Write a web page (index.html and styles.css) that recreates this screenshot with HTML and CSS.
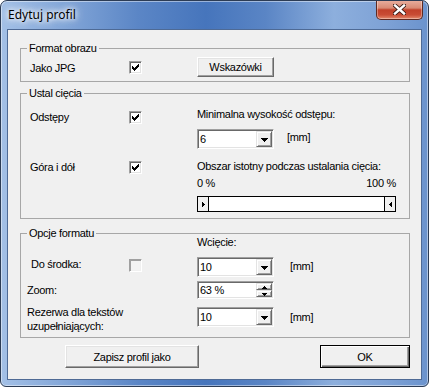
FILE: index.html
```html
<!DOCTYPE html>
<html lang="pl">
<head>
    <meta charset="UTF-8">
    <meta name="viewport" content="width=device-width, initial-scale=1.0">
    <title>Edytuj profil</title>
    <link rel="stylesheet" href="styles.css">
</head>
<body>
    <div class="window">
        <div class="titlebar">
            <span class="title">Edytuj profil</span>
            <div class="close">
                <svg width="13" height="11" viewBox="0 0 13 11">
                    <path d="M2 1.5 L11 9.5 M11 1.5 L2 9.5" stroke="#3a1a14" stroke-width="4.2" stroke-linecap="square"/>
                    <path d="M2 1.5 L11 9.5 M11 1.5 L2 9.5" stroke="#fff" stroke-width="2.4" stroke-linecap="square"/>
                </svg>
            </div>
        </div>

        <div class="client">
            <fieldset class="group g1">
                <legend>Format obrazu</legend>
                <div class="body">
                    <div class="row r-jpg">
                        <span class="lbl lbl-jpg">Jako JPG</span>
                        <span class="chk-cell"><span class="chk"><svg width="7" height="7" viewBox="0 0 7 7"><path d="M0 2h1v3h-1zM1 3h1v3h-1zM2 4h1v3h-1zM3 3h1v3h-1zM4 2h1v3h-1zM5 1h1v3h-1zM6 0h1v3h-1z"/></svg></span></span>
                        <button class="btn btn-hint">Wskazówki</button>
                    </div>
                </div>
            </fieldset>

            <fieldset class="group g2">
                <legend>Ustal cięcia</legend>
                <div class="body cols">
                    <div class="left">
                        <div class="row r-gap">
                            <span class="lbl">Odstępy</span>
                            <span class="chk-cell"><span class="chk"><svg width="7" height="7" viewBox="0 0 7 7"><path d="M0 2h1v3h-1zM1 3h1v3h-1zM2 4h1v3h-1zM3 3h1v3h-1zM4 2h1v3h-1zM5 1h1v3h-1zM6 0h1v3h-1z"/></svg></span></span>
                        </div>
                        <div class="row r-edge">
                            <span class="lbl">Góra i dół</span>
                            <span class="chk-cell"><span class="chk"><svg width="7" height="7" viewBox="0 0 7 7"><path d="M0 2h1v3h-1zM1 3h1v3h-1zM2 4h1v3h-1zM3 3h1v3h-1zM4 2h1v3h-1zM5 1h1v3h-1zM6 0h1v3h-1z"/></svg></span></span>
                        </div>
                    </div>
                    <div class="right">
                        <div class="txt">Minimalna wysokość odstępu:</div>
                        <div class="ctl-row r-min">
                            <div class="combo">
                                <span class="val">6</span>
                                <span class="drop"><svg width="7" height="4" viewBox="0 0 7 4"><path d="M0 0h7v1h-1v1h-1v1h-1v1h-1v-1h-1v-1h-1v-1h-1z"/></svg></span>
                            </div>
                            <span class="unit">[mm]</span>
                        </div>
                        <div class="txt t-area">Obszar istotny podczas ustalania cięcia:</div>
                        <div class="scale"><span>0 %</span><span>100 %</span></div>
                        <div class="slider">
                            <span class="thumb t-left"><svg width="3" height="5" viewBox="0 0 3 5"><path d="M0 0h1v1h1v1h1v1h-1v1h-1v1h-1z"/></svg></span>
                            <span class="track"></span>
                            <span class="thumb t-right"><svg width="3" height="5" viewBox="0 0 3 5"><path d="M3 0h-1v1h-1v1h-1v1h1v1h1v1h1z"/></svg></span>
                        </div>
                    </div>
                </div>
            </fieldset>

            <fieldset class="group g3">
                <legend>Opcje formatu</legend>
                <div class="body">
                    <div class="row r-head">
                        <span class="txt">Wcięcie:</span>
                    </div>
                    <div class="row r-center">
                        <span class="lbl lbl-center">Do środka:</span>
                        <span class="chk-cell"><span class="chk off"></span></span>
                        <div class="combo">
                            <span class="val">10</span>
                            <span class="drop"><svg width="7" height="4" viewBox="0 0 7 4"><path d="M0 0h7v1h-1v1h-1v1h-1v1h-1v-1h-1v-1h-1v-1h-1z"/></svg></span>
                        </div>
                        <span class="unit unit-wide">[mm]</span>
                    </div>
                    <div class="row r-zoom">
                        <span class="lbl lbl-out">Zoom:</span>
                        <span class="chk-cell"></span>
                        <div class="spin">
                            <span class="val">63 %</span>
                            <span class="spin-btns">
                                <span class="sbtn"><svg width="5" height="3" viewBox="0 0 5 3"><path d="M2 0h1v1h1v1h1v1h-5v-1h1v-1h1z"/></svg></span>
                                <span class="sbtn"><svg width="5" height="3" viewBox="0 0 5 3"><path d="M0 0h5v1h-1v1h-1v1h-1v-1h-1v-1h-1z"/></svg></span>
                            </span>
                        </div>
                    </div>
                    <div class="row r-reserve">
                        <span class="lbl-wide">Rezerwa dla tekstów<br>uzupełniających:</span>
                        <div class="combo">
                            <span class="val">10</span>
                            <span class="drop"><svg width="7" height="4" viewBox="0 0 7 4"><path d="M0 0h7v1h-1v1h-1v1h-1v1h-1v-1h-1v-1h-1v-1h-1z"/></svg></span>
                        </div>
                        <span class="unit unit-wide unit-low">[mm]</span>
                    </div>
                </div>
            </fieldset>

            <div class="actions">
                <button class="btn btn-save">Zapisz profil jako</button>
                <button class="btn btn-ok">OK</button>
            </div>
        </div>
    </div>
</body>
</html>
```

FILE: styles.css
```css
body {
    margin: 0;
    background: #fff;
    font-family: "Liberation Sans", Arial, sans-serif;
    font-size: 11px;
    letter-spacing: -0.3px;
    color: #000;
}

.window {
    width: 429px;
    height: 387px;
    box-sizing: border-box;
    border: 1px solid #2c3c55;
    border-radius: 7px 7px 6px 6px;
    background: linear-gradient(90deg, #a3c0e6 0%, #85a8d9 14%, #5b86c6 32%, #4675bc 48%, #5a85c5 62%, #8dafdd 78%, #7ea2d6 90%, #6b93cd 100%);
    box-shadow: inset 0 0 0 1px rgba(255, 255, 255, 0.45);
    display: flex;
    flex-direction: column;
    overflow: hidden;
}

/* title bar */

.titlebar {
    height: 28px;
    display: flex;
    justify-content: space-between;
    align-items: flex-start;
}

.title {
    font-family: "Noto Sans", sans-serif;
    font-size: 12px;
    line-height: 16px;
    letter-spacing: 0;
    margin: 6px 0 0 7px;
    text-shadow: 0 0 8px #fff, 0 0 8px #fff, 0 0 4px #fff;
}

.close {
    width: 47px;
    height: 20px;
    margin: -1px 5px 0 0;
    box-sizing: border-box;
    border: 1px solid #5e2a22;
    border-top: none;
    border-radius: 0 0 5px 5px;
    background: linear-gradient(#eab0a0, #d98a74 42%, #c2412a 52%, #c94c34 78%, #e48a6c);
    box-shadow: inset 0 0 0 1px rgba(255, 255, 255, 0.35);
    display: flex;
    justify-content: center;
    align-items: center;
}

/* client area */

.client {
    flex: 1;
    margin: 0 6px 6px;
    border: 1px solid #4e6a95;
    background: #f0f0f0;
    display: flex;
    flex-direction: column;
    padding: 0 11px 0 12px;
}

.group {
    margin: 0;
    padding: 0 6px;
    border: 1px solid #a7a7a7;
    min-width: 0;
}

.group legend {
    padding: 0 2px;
    line-height: 13px;
}

.g1 {
    margin-top: 12px;
}

.g2 {
    margin-top: 5px;
}

.g3 {
    margin-top: 8px;
}

.body {
    padding-left: 3px;
}

.row {
    display: flex;
    align-items: center;
}

.lbl {
    width: 99px;
    line-height: 13px;
}

.chk-cell {
    width: 68px;
    display: flex;
}

.chk {
    width: 13px;
    height: 13px;
    box-sizing: border-box;
    border: 1px solid;
    border-color: #a0a0a0 #fff #fff #a0a0a0;
    box-shadow: inset 1px 1px #696969, inset -1px -1px #e3e3e3;
    background: #fff;
    display: flex;
    justify-content: center;
    align-items: center;
}

.chk svg {
    shape-rendering: crispEdges;
}

.chk.off {
    background: #f3f3f3;
    box-shadow: inset 1px 1px #a0a0a0, inset -1px -1px #f0f0f0;
}

.btn {
    font-family: inherit;
    font-size: 11px;
    letter-spacing: -0.3px;
    color: #000;
    padding: 0;
    background: #f0f0f0;
    border: 1px solid;
    border-color: #fff #696969 #696969 #fff;
    box-shadow: inset -1px -1px #a0a0a0, inset 1px 1px #e3e3e3;
}

/* group 1 */

.g1 .body {
    padding-top: 2px;
    padding-bottom: 4px;
}

.lbl-jpg {
    margin-top: 2px;
}

.btn-hint {
    width: 77px;
    height: 20px;
}

/* group 2 */

.cols {
    display: flex;
    padding-bottom: 6px;
}

.left {
    width: 167px;
}

.r-gap {
    margin-top: 11px;
}

.r-edge {
    margin-top: 37px;
}

.right {
    width: 199px;
    margin-top: 8px;
    display: flex;
    flex-direction: column;
}

.txt {
    line-height: 13px;
}

.ctl-row {
    display: flex;
    align-items: flex-start;
}

.r-min {
    margin-top: 8px;
}

.unit {
    line-height: 13px;
    margin: 2px 0 0 13px;
}

.unit-wide {
    margin-left: 16px;
    margin-top: 0;
}

.t-area {
    margin-top: 11px;
}

.scale {
    margin-top: 4px;
    line-height: 13px;
    display: flex;
    justify-content: space-between;
}

.slider {
    margin-top: 6px;
    height: 16px;
    box-sizing: border-box;
    border: 1px solid #000;
    box-shadow: inset 1px 1px #a0a0a0;
    display: flex;
}

.thumb {
    width: 10px;
    background: #f0f0f0;
    display: flex;
    align-items: center;
    justify-content: center;
}

.thumb svg {
    shape-rendering: crispEdges;
}

.t-left {
    border-right: 1px solid #000;
}

.t-right {
    border-left: 1px solid #000;
}

.track {
    flex: 1;
    background: #fff;
}

/* combo and spin boxes */

.combo,
.spin {
    width: 77px;
    height: 20px;
    box-sizing: border-box;
    border: 1px solid;
    border-color: #a0a0a0 #fff #fff #a0a0a0;
    box-shadow: inset 1px 1px #696969, inset -1px -1px #e3e3e3;
    background: #fff;
    padding: 1px;
    display: flex;
    align-items: center;
}

.spin {
    height: 18px;
}

.val {
    flex: 1;
    padding-left: 1px;
    line-height: 13px;
}

.drop,
.sbtn {
    width: 16px;
    height: 16px;
    box-sizing: border-box;
    border: 1px solid;
    border-color: #e3e3e3 #696969 #696969 #e3e3e3;
    box-shadow: inset 1px 1px #fff, inset -1px -1px #a0a0a0;
    background: #f0f0f0;
    display: flex;
    justify-content: center;
    align-items: center;
}

.drop svg,
.sbtn svg {
    shape-rendering: crispEdges;
    margin-top: 1px;
}

.spin-btns {
    display: flex;
    flex-direction: column;
}

.sbtn {
    height: 7px;
    margin-bottom: 0;
}

.sbtn + .sbtn {
    height: 7px;
}

/* group 3 */

.g3 .body {
    padding-bottom: 4px;
}

.r-head {
    margin-top: -4px;
    padding-left: 167px;
}

.r-center {
    margin-top: 8px;
    align-items: flex-start;
}

.lbl-center {
    margin: 1px 0 0 1px;
    width: 98px;
}

.r-center .chk-cell {
    margin-top: 2px;
}

.r-center .unit {
    margin-top: 3px;
}

.r-zoom {
    margin-top: 4px;
}

.lbl-out {
    margin-left: -3px;
    width: 102px;
}

.r-reserve {
    margin-top: 8px;
    align-items: flex-start;
}

.lbl-wide {
    width: 170px;
    margin: -2px 0 0 -3px;
    line-height: 14px;
}

.unit-low {
    margin-top: 4px;
}

/* bottom buttons */

.actions {
    margin-top: 7px;
    padding-left: 45px;
    display: flex;
    justify-content: space-between;
}

.btn-save {
    width: 134px;
    height: 23px;
}

.btn-ok {
    width: 90px;
    height: 23px;
    border-color: #000;
    box-shadow: inset 1px 1px #fff, inset -1px -1px #696969, inset -2px -2px #a0a0a0;
}
```
